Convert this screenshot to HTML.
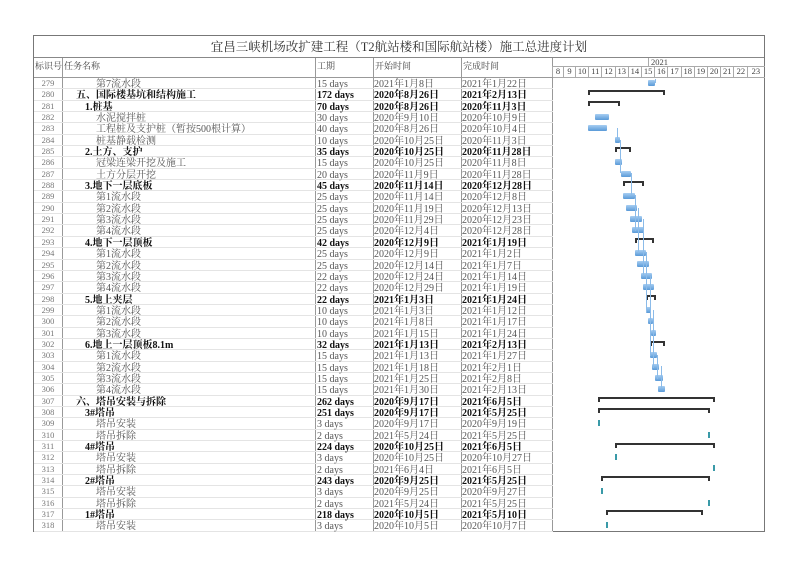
<!DOCTYPE html>
<html><head><meta charset="utf-8"><style>
*{margin:0;padding:0;box-sizing:border-box}
body{width:800px;height:566px;background:#fff;position:relative;overflow:hidden;font-family:"Liberation Serif","Noto Serif CJK SC",serif;font-size:10px;color:#555}
#frame{position:absolute;left:33px;top:35px;width:732px;height:497px;border:1px solid #777}
#title{position:absolute;left:0;top:0;width:730px;height:22px;border-bottom:1px solid #888;text-align:center;font-size:12.5px;line-height:22px;color:#333}
.vl{position:absolute;top:22px;bottom:0;width:1px;background:#999}
.hd{position:absolute;top:23px;font-size:9px;color:#444}
#rows{position:absolute;left:0;top:42px;width:519px}
.r{height:11.35px;line-height:11px;border-bottom:1px solid #e4e4e4;position:relative;white-space:nowrap;overflow:visible}
.r span{position:absolute;top:1px}
.r span.id{top:0;left:0;width:28px;text-align:center;color:#777;font-size:8.5px;font-weight:normal}
.b{font-weight:bold;color:#111}
.bar{position:absolute;height:6px;background:linear-gradient(#a8cef2,#5a9ad8);border-radius:1px}
.sum{position:absolute;height:2px;background:#333}
.sum:before,.sum:after{content:"";position:absolute;top:0;width:2px;height:5px;background:#333}
.sum:before{left:0}.sum:after{right:0}
.ms{position:absolute;width:2px;height:6px;background:#3a9aa8}
.tk{position:absolute;top:66px;height:11px;border-left:1px solid #aaa;font-size:8.5px;line-height:11px;text-align:center;color:#444}
.cn{position:absolute;width:1px;background:#8bbbe9}
</style></head><body>
<div id="frame">
<div id="title">宜昌三峡机场改扩建工程（T2航站楼和国际航站楼）施工总进度计划</div>
<div class="vl" style="left:28px"></div>
<div class="vl" style="left:281px"></div>
<div class="vl" style="left:339px"></div>
<div class="vl" style="left:427px"></div>
<div class="vl" style="left:518px"></div>
<div style="position:absolute;left:0;top:41px;width:519px;height:1px;background:#999"></div>
<div class="hd" style="left:1px">标识号</div>
<div class="hd" style="left:30px">任务名称</div>
<div class="hd" style="left:283px">工期</div>
<div class="hd" style="left:341px">开始时间</div>
<div class="hd" style="left:429px">完成时间</div>
<div style="position:absolute;left:519px;top:30px;width:212px;height:1px;background:#aaa"></div>
<div style="position:absolute;left:519px;top:41px;width:212px;height:1px;background:#aaa"></div>
<div style="position:absolute;left:614px;top:22px;width:1px;height:8px;background:#aaa"></div>
<div style="position:absolute;left:617px;top:21px;font-size:8.5px;color:#444">2021</div>
<div id="rows">
<div class="r"><span class="id">279</span><span style="left:62px">第7流水段</span><span style="left:283px">15 days</span><span style="left:340px">2021年1月8日</span><span style="left:428px">2021年1月22日</span></div>
<div class="r b"><span class="id">280</span><span style="left:42px">五、国际楼基坑和结构施工</span><span style="left:283px">172 days</span><span style="left:340px">2020年8月26日</span><span style="left:428px">2021年2月13日</span></div>
<div class="r b"><span class="id">281</span><span style="left:51px">1.桩基</span><span style="left:283px">70 days</span><span style="left:340px">2020年8月26日</span><span style="left:428px">2020年11月3日</span></div>
<div class="r"><span class="id">282</span><span style="left:62px">水泥搅拌桩</span><span style="left:283px">30 days</span><span style="left:340px">2020年9月10日</span><span style="left:428px">2020年10月9日</span></div>
<div class="r"><span class="id">283</span><span style="left:62px">工程桩及支护桩（暂按500根计算）</span><span style="left:283px">40 days</span><span style="left:340px">2020年8月26日</span><span style="left:428px">2020年10月4日</span></div>
<div class="r"><span class="id">284</span><span style="left:62px">桩基静载检测</span><span style="left:283px">10 days</span><span style="left:340px">2020年10月25日</span><span style="left:428px">2020年11月3日</span></div>
<div class="r b"><span class="id">285</span><span style="left:51px">2.土方、支护</span><span style="left:283px">35 days</span><span style="left:340px">2020年10月25日</span><span style="left:428px">2020年11月28日</span></div>
<div class="r"><span class="id">286</span><span style="left:62px">冠梁连梁开挖及施工</span><span style="left:283px">15 days</span><span style="left:340px">2020年10月25日</span><span style="left:428px">2020年11月8日</span></div>
<div class="r"><span class="id">287</span><span style="left:62px">土方分层开挖</span><span style="left:283px">20 days</span><span style="left:340px">2020年11月9日</span><span style="left:428px">2020年11月28日</span></div>
<div class="r b"><span class="id">288</span><span style="left:51px">3.地下一层底板</span><span style="left:283px">45 days</span><span style="left:340px">2020年11月14日</span><span style="left:428px">2020年12月28日</span></div>
<div class="r"><span class="id">289</span><span style="left:62px">第1流水段</span><span style="left:283px">25 days</span><span style="left:340px">2020年11月14日</span><span style="left:428px">2020年12月8日</span></div>
<div class="r"><span class="id">290</span><span style="left:62px">第2流水段</span><span style="left:283px">25 days</span><span style="left:340px">2020年11月19日</span><span style="left:428px">2020年12月13日</span></div>
<div class="r"><span class="id">291</span><span style="left:62px">第3流水段</span><span style="left:283px">25 days</span><span style="left:340px">2020年11月29日</span><span style="left:428px">2020年12月23日</span></div>
<div class="r"><span class="id">292</span><span style="left:62px">第4流水段</span><span style="left:283px">25 days</span><span style="left:340px">2020年12月4日</span><span style="left:428px">2020年12月28日</span></div>
<div class="r b"><span class="id">293</span><span style="left:51px">4.地下一层顶板</span><span style="left:283px">42 days</span><span style="left:340px">2020年12月9日</span><span style="left:428px">2021年1月19日</span></div>
<div class="r"><span class="id">294</span><span style="left:62px">第1流水段</span><span style="left:283px">25 days</span><span style="left:340px">2020年12月9日</span><span style="left:428px">2021年1月2日</span></div>
<div class="r"><span class="id">295</span><span style="left:62px">第2流水段</span><span style="left:283px">25 days</span><span style="left:340px">2020年12月14日</span><span style="left:428px">2021年1月7日</span></div>
<div class="r"><span class="id">296</span><span style="left:62px">第3流水段</span><span style="left:283px">22 days</span><span style="left:340px">2020年12月24日</span><span style="left:428px">2021年1月14日</span></div>
<div class="r"><span class="id">297</span><span style="left:62px">第4流水段</span><span style="left:283px">22 days</span><span style="left:340px">2020年12月29日</span><span style="left:428px">2021年1月19日</span></div>
<div class="r b"><span class="id">298</span><span style="left:51px">5.地上夹层</span><span style="left:283px">22 days</span><span style="left:340px">2021年1月3日</span><span style="left:428px">2021年1月24日</span></div>
<div class="r"><span class="id">299</span><span style="left:62px">第1流水段</span><span style="left:283px">10 days</span><span style="left:340px">2021年1月3日</span><span style="left:428px">2021年1月12日</span></div>
<div class="r"><span class="id">300</span><span style="left:62px">第2流水段</span><span style="left:283px">10 days</span><span style="left:340px">2021年1月8日</span><span style="left:428px">2021年1月17日</span></div>
<div class="r"><span class="id">301</span><span style="left:62px">第3流水段</span><span style="left:283px">10 days</span><span style="left:340px">2021年1月15日</span><span style="left:428px">2021年1月24日</span></div>
<div class="r b"><span class="id">302</span><span style="left:51px">6.地上一层顶板8.1m</span><span style="left:283px">32 days</span><span style="left:340px">2021年1月13日</span><span style="left:428px">2021年2月13日</span></div>
<div class="r"><span class="id">303</span><span style="left:62px">第1流水段</span><span style="left:283px">15 days</span><span style="left:340px">2021年1月13日</span><span style="left:428px">2021年1月27日</span></div>
<div class="r"><span class="id">304</span><span style="left:62px">第2流水段</span><span style="left:283px">15 days</span><span style="left:340px">2021年1月18日</span><span style="left:428px">2021年2月1日</span></div>
<div class="r"><span class="id">305</span><span style="left:62px">第3流水段</span><span style="left:283px">15 days</span><span style="left:340px">2021年1月25日</span><span style="left:428px">2021年2月8日</span></div>
<div class="r"><span class="id">306</span><span style="left:62px">第4流水段</span><span style="left:283px">15 days</span><span style="left:340px">2021年1月30日</span><span style="left:428px">2021年2月13日</span></div>
<div class="r b"><span class="id">307</span><span style="left:42px">六、塔吊安装与拆除</span><span style="left:283px">262 days</span><span style="left:340px">2020年9月17日</span><span style="left:428px">2021年6月5日</span></div>
<div class="r b"><span class="id">308</span><span style="left:51px">3#塔吊</span><span style="left:283px">251 days</span><span style="left:340px">2020年9月17日</span><span style="left:428px">2021年5月25日</span></div>
<div class="r"><span class="id">309</span><span style="left:62px">塔吊安装</span><span style="left:283px">3 days</span><span style="left:340px">2020年9月17日</span><span style="left:428px">2020年9月19日</span></div>
<div class="r"><span class="id">310</span><span style="left:62px">塔吊拆除</span><span style="left:283px">2 days</span><span style="left:340px">2021年5月24日</span><span style="left:428px">2021年5月25日</span></div>
<div class="r b"><span class="id">311</span><span style="left:51px">4#塔吊</span><span style="left:283px">224 days</span><span style="left:340px">2020年10月25日</span><span style="left:428px">2021年6月5日</span></div>
<div class="r"><span class="id">312</span><span style="left:62px">塔吊安装</span><span style="left:283px">3 days</span><span style="left:340px">2020年10月25日</span><span style="left:428px">2020年10月27日</span></div>
<div class="r"><span class="id">313</span><span style="left:62px">塔吊拆除</span><span style="left:283px">2 days</span><span style="left:340px">2021年6月4日</span><span style="left:428px">2021年6月5日</span></div>
<div class="r b"><span class="id">314</span><span style="left:51px">2#塔吊</span><span style="left:283px">243 days</span><span style="left:340px">2020年9月25日</span><span style="left:428px">2021年5月25日</span></div>
<div class="r"><span class="id">315</span><span style="left:62px">塔吊安装</span><span style="left:283px">3 days</span><span style="left:340px">2020年9月25日</span><span style="left:428px">2020年9月27日</span></div>
<div class="r"><span class="id">316</span><span style="left:62px">塔吊拆除</span><span style="left:283px">2 days</span><span style="left:340px">2021年5月24日</span><span style="left:428px">2021年5月25日</span></div>
<div class="r b"><span class="id">317</span><span style="left:51px">1#塔吊</span><span style="left:283px">218 days</span><span style="left:340px">2020年10月5日</span><span style="left:428px">2021年5月10日</span></div>
<div class="r"><span class="id">318</span><span style="left:62px">塔吊安装</span><span style="left:283px">3 days</span><span style="left:340px">2020年10月5日</span><span style="left:428px">2020年10月7日</span></div>
</div>
</div>
<div class="tk" style="left:552px;width:11px">8</div>
<div class="tk" style="left:563px;width:12px">9</div>
<div class="tk" style="left:575px;width:13.2px">10</div>
<div class="tk" style="left:588.2px;width:13.2px">11</div>
<div class="tk" style="left:601.4px;width:13.2px">12</div>
<div class="tk" style="left:614.6px;width:13.2px">13</div>
<div class="tk" style="left:627.8px;width:13.2px">14</div>
<div class="tk" style="left:641px;width:13.2px">15</div>
<div class="tk" style="left:654.2px;width:13.2px">16</div>
<div class="tk" style="left:667.4px;width:13.2px">17</div>
<div class="tk" style="left:680.6px;width:13.2px">18</div>
<div class="tk" style="left:693.8px;width:13.2px">19</div>
<div class="tk" style="left:707px;width:13.2px">20</div>
<div class="tk" style="left:720.2px;width:13.2px">21</div>
<div class="tk" style="left:733.4px;width:14px">22</div>
<div class="tk" style="left:747.4px;width:16px">23</div>
<div class="bar" style="left:648px;top:80px;width:7px"></div>
<div class="sum" style="left:588px;top:90px;width:77px"></div>
<div class="sum" style="left:588px;top:101px;width:32px"></div>
<div class="bar" style="left:595px;top:114px;width:14px"></div>
<div class="bar" style="left:588px;top:125px;width:19px"></div>
<div class="bar" style="left:615px;top:137px;width:5px"></div>
<div class="sum" style="left:615px;top:147px;width:16px"></div>
<div class="bar" style="left:615px;top:159px;width:7px"></div>
<div class="bar" style="left:621px;top:171px;width:10px"></div>
<div class="sum" style="left:623px;top:181px;width:21px"></div>
<div class="bar" style="left:623px;top:193px;width:12px"></div>
<div class="bar" style="left:626px;top:205px;width:11px"></div>
<div class="bar" style="left:630px;top:216px;width:12px"></div>
<div class="bar" style="left:632px;top:227px;width:12px"></div>
<div class="sum" style="left:635px;top:238px;width:19px"></div>
<div class="bar" style="left:635px;top:250px;width:11px"></div>
<div class="bar" style="left:637px;top:261px;width:12px"></div>
<div class="bar" style="left:641px;top:273px;width:11px"></div>
<div class="bar" style="left:643px;top:284px;width:11px"></div>
<div class="sum" style="left:646px;top:295px;width:10px"></div>
<div class="bar" style="left:646px;top:307px;width:5px"></div>
<div class="bar" style="left:648px;top:318px;width:5px"></div>
<div class="bar" style="left:651px;top:330px;width:5px"></div>
<div class="sum" style="left:650px;top:341px;width:15px"></div>
<div class="bar" style="left:650px;top:352px;width:7px"></div>
<div class="bar" style="left:652px;top:364px;width:7px"></div>
<div class="bar" style="left:655px;top:375px;width:8px"></div>
<div class="bar" style="left:658px;top:386px;width:7px"></div>
<div class="sum" style="left:598px;top:397px;width:117px"></div>
<div class="sum" style="left:598px;top:408px;width:112px"></div>
<div class="ms" style="left:598px;top:420px"></div>
<div class="ms" style="left:708px;top:432px"></div>
<div class="sum" style="left:615px;top:443px;width:100px"></div>
<div class="ms" style="left:615px;top:454px"></div>
<div class="ms" style="left:713px;top:465px"></div>
<div class="sum" style="left:601px;top:476px;width:109px"></div>
<div class="ms" style="left:601px;top:488px"></div>
<div class="ms" style="left:708px;top:500px"></div>
<div class="sum" style="left:606px;top:510px;width:97px"></div>
<div class="ms" style="left:606px;top:522px"></div>
<div class="cn" style="left:655px;top:79px;height:4px"></div>
<div class="cn" style="left:617px;top:128px;height:12px"></div>
<div class="cn" style="left:620px;top:140px;height:33px"></div>
<div class="cn" style="left:631px;top:173px;height:22px"></div>
<div class="cn" style="left:635px;top:195px;height:36px"></div>
<div class="cn" style="left:638px;top:208px;height:45px"></div>
<div class="cn" style="left:643px;top:219px;height:57px"></div>
<div class="cn" style="left:646px;top:252px;height:60px"></div>
<div class="cn" style="left:650px;top:276px;height:80px"></div>
<div class="cn" style="left:653px;top:310px;height:58px"></div>
<div class="cn" style="left:657px;top:355px;height:24px"></div>
<div class="cn" style="left:661px;top:366px;height:22px"></div>
</body></html>
